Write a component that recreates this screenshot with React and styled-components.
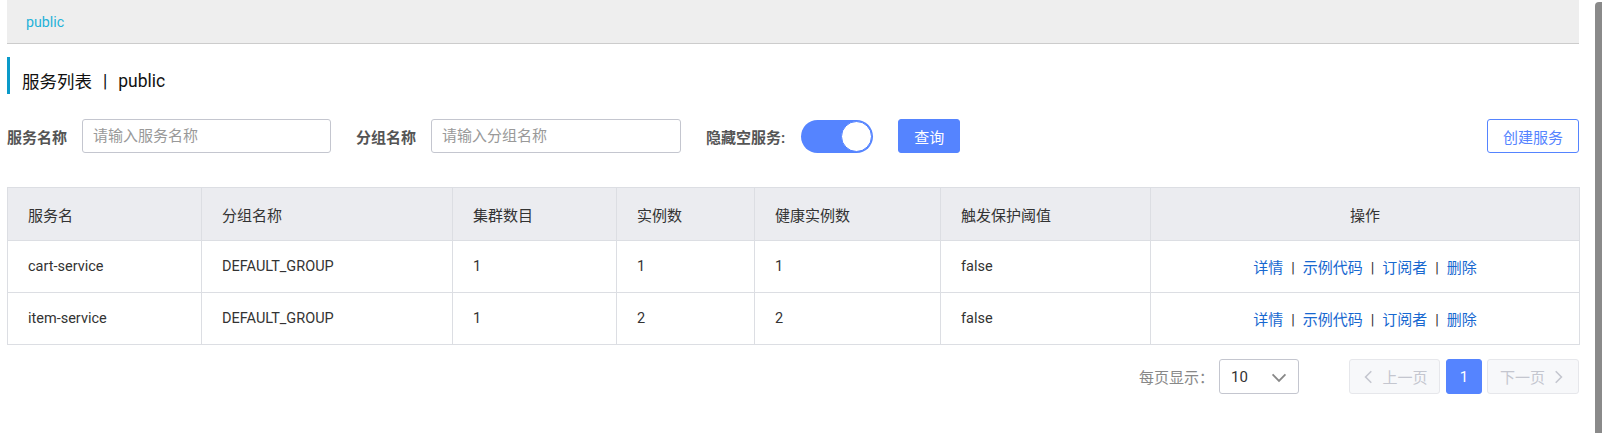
import React from "react";
import styled, { createGlobalStyle } from "styled-components";

const GlobalStyle = createGlobalStyle`
  html, body {
    margin: 0;
    padding: 0;
    background: #fff;
    overflow: hidden;
  }
  body {
    font-family: Roboto, "Noto Sans CJK SC", sans-serif;
    font-size: 14.5px;
    color: #333;
  }
  * { box-sizing: border-box; }
`;

const Page = styled.div`
  width: 1579px;
  padding-left: 7px;
`;

const Breadcrumb = styled.div`
  height: 44px;
  background: #eeeeee;
  border-bottom: 1px solid #cccccc;
  display: flex;
  align-items: center;
  padding-left: 19px;
  color: #1fb2d9;
  font-size: 14.2px;
`;

const Title = styled.h1`
  margin: 13px 0 0;
  height: 37px;
  border-left: 3px solid #0a9ac9;
  padding: 10px 0 0 12px;
  display: flex;
  align-items: center;
  font-size: 17.5px;
  font-weight: normal;
  color: #111;

  .sep {
    margin: 0 11px;
  }
`;

const SearchBar = styled.div`
  margin-top: 25px;
  display: flex;
  align-items: center;
  height: 34px;
`;

const FormItem = styled.div`
  display: flex;
  align-items: center;
  margin-right: ${p => p.$gap ?? 25}px;
`;

const Label = styled.label`
  font-weight: bold;
  font-size: 15px;
  color: #555;
  margin-right: ${p => p.$gap ?? 15}px;
  white-space: nowrap;
`;

const Input = styled.input`
  width: ${p => p.$width}px;
  height: 34px;
  border: 1px solid #c4c6cf;
  border-radius: 3px;
  padding: 0 10px;
  font-family: inherit;
  font-size: 15px;
  outline: none;
  &::placeholder { color: #999; }
`;

const Switch = styled.div`
  width: 72px;
  height: 33px;
  border-radius: 17px;
  background: #5584ff;
  display: flex;
  justify-content: flex-end;
  align-items: center;
  padding-right: 1px;
`;

const Knob = styled.div`
  width: 31px;
  height: 31px;
  border-radius: 50%;
  background: #fff;
  border: 1px solid #5584ff;
`;

const Button = styled.button`
  height: 34px;
  width: ${p => p.$width}px;
  border-radius: 3px;
  font-family: inherit;
  font-size: 15px;
  cursor: pointer;
  border: 1px solid #5584ff;
  background: ${p => (p.$primary ? "#5584ff" : "#fff")};
  color: ${p => (p.$primary ? "#fff" : "#5584ff")};
`;

const Spacer = styled.div`
  flex: 1;
`;

const Table = styled.table`
  margin-top: 34px;
  width: 1572px;
  border-collapse: collapse;
  table-layout: fixed;

  th, td {
    border: 1px solid #dcdee3;
    padding: 0 20px;
    text-align: left;
    font-weight: normal;
    color: #333;
  }
  th {
    height: 53px;
    background: #ebecf0;
    font-size: 15px;
  }
  td {
    height: 52px;
  }
  .center { text-align: center; }
`;

const Link = styled.a`
  color: #1768d0;
  font-size: 15px;
  text-decoration: none;
`;

const Divider = styled.span`
  color: #333;
  margin: 0 8px;
`;

const Pager = styled.div`
  margin-top: 14px;
  display: flex;
  align-items: center;
  justify-content: flex-end;
  height: 35px;
  font-size: 15px;
`;

const PagerLabel = styled.span`
  color: #888;
  margin-right: 5px;
`;

const Select = styled.div`
  width: 80px;
  height: 35px;
  border: 1px solid #c4c6cf;
  border-radius: 3px;
  display: flex;
  align-items: center;
  justify-content: space-between;
  padding: 0 10px 0 11px;
  margin-right: 50px;
  color: #333;
`;

const PageButton = styled.div`
  height: 35px;
  width: ${p => p.$width}px;
  margin-left: ${p => p.$gap || 0}px;
  border-radius: 3px;
  display: flex;
  align-items: center;
  justify-content: center;
  gap: 5px;
  background: ${p => (p.$active ? "#5584ff" : "#f7f8fa")};
  border: 1px solid ${p => (p.$active ? "#5584ff" : "#e6e7eb")};
  color: ${p => (p.$active ? "#fff" : "#c4c6cf")};
`;

const ScrollThumb = styled.div`
  position: fixed;
  top: 2px;
  right: 0;
  width: 7px;
  bottom: 0;
  background: #8a8a8a;
  border-radius: 4px 0 0 0;
`;

const Chevron = ({ dir = "down", color = "#999", size = 14 }) => {
  const paths = {
    down: "M2 5 L7 10 L12 5",
    left: "M9 2 L4 7 L9 12",
    right: "M5 2 L10 7 L5 12",
  };
  return (
    <svg width={size} height={size} viewBox="0 0 14 14" fill="none">
      <path d={paths[dir]} stroke={color} strokeWidth="1.4" />
    </svg>
  );
};

const services = [
  { name: "cart-service", group: "DEFAULT_GROUP", clusters: 1, instances: 1, healthy: 1, threshold: "false" },
  { name: "item-service", group: "DEFAULT_GROUP", clusters: 1, instances: 2, healthy: 2, threshold: "false" },
];

const colWidths = [194, 251, 164, 138, 186, 210, 429];

export default function App() {
  return (
    <>
      <GlobalStyle />
      <Page>
        <Breadcrumb>public</Breadcrumb>
        <Title>
          服务列表<span className="sep">|</span>public
        </Title>

        <SearchBar>
          <FormItem>
            <Label>服务名称</Label>
            <Input $width={249} placeholder="请输入服务名称" />
          </FormItem>
          <FormItem>
            <Label>分组名称</Label>
            <Input $width={250} placeholder="请输入分组名称" />
          </FormItem>
          <FormItem>
            <Label $gap={16}>隐藏空服务:</Label>
            <Switch>
              <Knob />
            </Switch>
          </FormItem>
          <Button $primary $width={62}>查询</Button>
          <Spacer />
          <Button $width={92}>创建服务</Button>
        </SearchBar>

        <Table>
          <colgroup>
            {colWidths.map((w, i) => (
              <col key={i} style={{ width: w }} />
            ))}
          </colgroup>
          <thead>
            <tr>
              <th>服务名</th>
              <th>分组名称</th>
              <th>集群数目</th>
              <th>实例数</th>
              <th>健康实例数</th>
              <th>触发保护阈值</th>
              <th className="center">操作</th>
            </tr>
          </thead>
          <tbody>
            {services.map(s => (
              <tr key={s.name}>
                <td>{s.name}</td>
                <td>{s.group}</td>
                <td>{s.clusters}</td>
                <td>{s.instances}</td>
                <td>{s.healthy}</td>
                <td>{s.threshold}</td>
                <td className="center">
                  <Link>详情</Link>
                  <Divider>|</Divider>
                  <Link>示例代码</Link>
                  <Divider>|</Divider>
                  <Link>订阅者</Link>
                  <Divider>|</Divider>
                  <Link>删除</Link>
                </td>
              </tr>
            ))}
          </tbody>
        </Table>

        <Pager>
          <PagerLabel>每页显示：</PagerLabel>
          <Select>
            <span>10</span>
            <Chevron dir="down" color="#888" size={18} />
          </Select>
          <PageButton $width={91}>
            <Chevron dir="left" color="#c4c6cf" size={16} />
            上一页
          </PageButton>
          <PageButton $width={36} $gap={6} $active>1</PageButton>
          <PageButton $width={92} $gap={5}>
            下一页
            <Chevron dir="right" color="#c4c6cf" size={16} />
          </PageButton>
        </Pager>
      </Page>
      <ScrollThumb />
    </>
  );
}
